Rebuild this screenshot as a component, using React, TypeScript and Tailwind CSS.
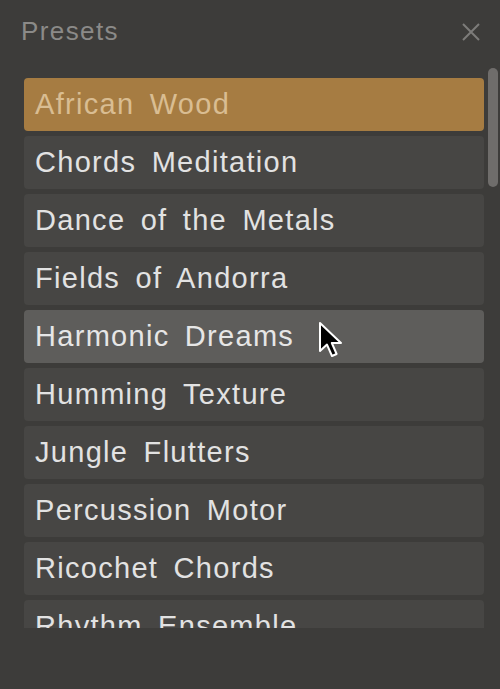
import React from 'react';

const presets = [
  'African Wood',
  'Chords Meditation',
  'Dance of the Metals',
  'Fields of Andorra',
  'Harmonic Dreams',
  'Humming Texture',
  'Jungle Flutters',
  'Percussion Motor',
  'Ricochet Chords',
  'Rhythm Ensemble',
];

function Cursor() {
  return (
    <svg width="26" height="38" viewBox="0 0 13 19" className="absolute left-[318px] top-[321px]">
      <path
        d="M1 1 L1 15 L4.5 11.8 L7 17.5 L9.3 16.5 L6.9 11 L11.5 11 Z"
        fill="#000"
        stroke="#fff"
        strokeWidth="1"
        strokeLinejoin="round"
      />
    </svg>
  );
}

export default function App() {
  const selected = 0;
  const hovered = 4;

  return (
    <div
      className="relative w-[500px] h-[689px] bg-[#3d3c3a] overflow-hidden"
      style={{ fontFamily: '"Liberation Sans", Arial, sans-serif' }}
    >
      <div className="flex items-center justify-between h-[62px] pl-[21px] pr-[19px]">
        <span className="text-[26px] tracking-[1.4px] text-[#8b8a88] leading-none">Presets</span>
        <svg width="20" height="20" viewBox="0 0 20 20" className="mt-[1px]">
          <path d="M2 2 L18 18 M18 2 L2 18" stroke="#7d7c7a" strokeWidth="2" />
        </svg>
      </div>

      <div className="mt-[16px] ml-[24px] w-[460px] h-[550px] overflow-hidden flex flex-col gap-[5px]">
        {presets.map((name, i) => (
          <div
            key={name}
            className={`shrink-0 h-[53px] rounded-[4px] flex items-center pl-[11px] text-[29px] tracking-[1.3px] [word-spacing:6px] leading-none ${
              i === selected
                ? 'bg-[#a67c42] text-[#d9bd92]'
                : i === hovered
                ? 'bg-[#5e5d5b] text-[#e6e6e6]'
                : 'bg-[#474644] text-[#e2e2e2]'
            }`}
          >
            {name}
          </div>
        ))}
      </div>

      <div className="absolute left-[488px] top-[68px] w-[10px] h-[119px] rounded-full bg-[#6f6d6b]" />

      <Cursor />
    </div>
  );
}
